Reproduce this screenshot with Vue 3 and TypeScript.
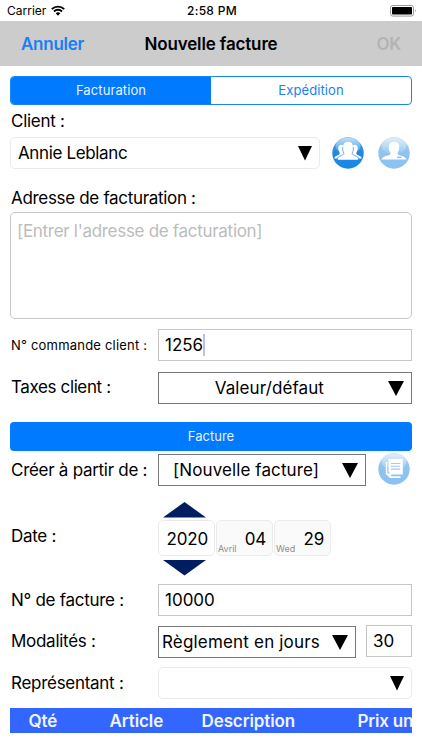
<script setup lang="ts">
import { ref } from 'vue'

const tab = ref<'billing' | 'shipping'>('billing')
const dateParts = [
  { value: '2020', note: '' },
  { value: '04', note: 'Avril' },
  { value: '29', note: 'Wed' },
]
const columns = [
  { key: 'qty', title: 'Qté' },
  { key: 'item', title: 'Article' },
  { key: 'desc', title: 'Description' },
  { key: 'price', title: 'Prix un' },
]
</script>

<template>
  <div class="screen">
    <header class="status">
      <span class="network">
        <span class="carrier">Carrier</span>
        <svg class="wifi" viewBox="0 0 14 11">
          <path d="M0.8 4.2 A8.8 8.8 0 0 1 13.2 4.2" />
          <path d="M3 6.5 A5.6 5.6 0 0 1 11 6.5" />
          <path class="dot" d="M4.7 8.3 A3.3 3.3 0 0 1 9.3 8.3 L7 10.7 Z" />
        </svg>
      </span>
      <span class="clock">2:58 PM</span>
      <svg class="battery" viewBox="0 0 27 12">
        <rect x="0.5" y="0.5" width="23" height="10.6" rx="2.3" fill="#fff" stroke="#999" />
        <rect x="2" y="2" width="20" height="7.6" rx="0.8" />
        <path d="M25 4 Q26.4 5.8 25 7.6 Z" fill="#888" />
      </svg>
    </header>

    <nav class="nav">
      <span class="cancel">Annuler</span>
      <span class="title">Nouvelle facture</span>
      <span class="ok">OK</span>
    </nav>

    <main class="form">
      <div class="segments">
        <span class="segment" :class="{ on: tab === 'billing' }" @click="tab = 'billing'">Facturation</span>
        <span class="segment" :class="{ on: tab === 'shipping' }" @click="tab = 'shipping'">Expédition</span>
      </div>

      <div class="label client-label">Client :</div>
      <div class="row client-row">
        <div class="select soft client">
          <span class="client-name">Annie Leblanc</span>
          <svg class="arrow small" viewBox="0 0 14 15"><path d="M0 0H14L7 14.5Z" /></svg>
        </div>
        <svg class="orb group" viewBox="0 0 32 32">
          <defs>
            <linearGradient id="orbBlue" x1="0" y1="0" x2="0" y2="1">
              <stop offset="0" stop-color="#5fadec" />
              <stop offset="0.45" stop-color="#2488df" />
              <stop offset="1" stop-color="#1687ea" />
            </linearGradient>
            <linearGradient id="gloss" x1="0" y1="0" x2="0" y2="1">
              <stop offset="0" stop-color="#fff" stop-opacity="0.6" />
              <stop offset="1" stop-color="#fff" stop-opacity="0.05" />
            </linearGradient>
          </defs>
          <circle cx="16" cy="16" r="15.7" fill="url(#orbBlue)" />
          <ellipse cx="16" cy="9" rx="12.5" ry="8.3" fill="url(#gloss)" />
          <g fill="#fff">
            <path d="M2.2 21.5 Q2.8 19 7 17.8 L7.8 16 Q6 13.4 6.2 10.8 Q6.6 7.8 9.4 7.8 Q12 8 12 12 L13 21.5Z" />
            <path d="M29.8 21.5 Q29.2 19 25 17.8 L24.2 16 Q26 13.4 25.8 10.8 Q25.4 7.8 22.6 7.8 Q20 8 20 12 L19 21.5Z" />
            <path d="M5.6 22.8 Q6 20.2 11 18.6 Q12.5 18 12.4 16.4 Q11 13.4 11.1 9.2 Q11.6 4.8 16 4.8 Q20.4 4.8 20.9 9.2 Q21 13.4 19.6 16.4 Q19.5 18 21 18.6 Q26 20.2 26.4 22.8Z" />
          </g>
          <path d="M4.6 22.2 Q5.4 19.5 10.2 18.1 Q11.6 17.5 11.6 16.4 Q10.6 14 10.6 10 M27.4 22.2 Q26.6 19.5 21.8 18.1 Q20.4 17.5 20.4 16.4 Q21.4 14 21.4 10" fill="none" stroke="#4aa0e8" stroke-width="0.8" />
        </svg>
        <svg class="orb faded" viewBox="0 0 32 32">
          <circle cx="16" cy="16" r="15.7" fill="url(#orbBlue)" />
          <ellipse cx="16" cy="9" rx="12.5" ry="8.3" fill="url(#gloss)" />
          <path fill="#fff" d="M3.4 22.5 Q4 19.6 10.8 18.2 Q12.8 17.6 12.4 15.9 Q10.5 13 10.8 8.9 Q11.3 4.8 16 4.8 Q20.7 4.8 21.2 8.9 Q21.5 13 19.6 15.9 Q19.2 17.6 21.2 18.2 Q28 19.6 28.6 22.5Z" />
          <rect x="19" y="19.6" width="4.5" height="1.5" fill="#2488df" />
        </svg>
      </div>

      <div class="label address-label">Adresse de facturation :</div>
      <div class="address">[Entrer l'adresse de facturation]</div>

      <div class="row field-row order-row">
        <span class="label order-label">N° commande client :</span>
        <div class="input grow">1256<i class="caret"></i></div>
      </div>

      <div class="row field-row tax-row">
        <span class="label tax-label">Taxes client :</span>
        <div class="select hard grow tax">
          <span class="tax-text">Valeur/défaut</span>
          <svg class="arrow" viewBox="0 0 16 15"><path d="M0 0H16L8 15Z" /></svg>
        </div>
      </div>

      <div class="section">Facture</div>

      <div class="row field-row create-row">
        <span class="label create-label">Créer à partir de :</span>
        <div class="select hard create">
          <span class="create-text">[Nouvelle facture]</span>
          <svg class="arrow" viewBox="0 0 16 15"><path d="M0 0H16L8 15Z" /></svg>
        </div>
        <svg class="orb faded note-orb" viewBox="0 0 32 32">
          <circle cx="16" cy="16" r="15.7" fill="url(#orbBlue)" />
          <ellipse cx="16" cy="9" rx="12.5" ry="8.3" fill="url(#gloss)" />
          <path d="M10.5 6H24.8V21.5H13.5L10.5 18.8Z" fill="#fff" />
          <path d="M13 10.5H22.3M13 13.3H22.3M13 16.1H22.3" fill="none" stroke="#409be3" stroke-width="1.1" />
          <path d="M7.8 9V21L12 25H22.5V23.2H13.2V20.2H9.3V9Z" fill="#fff" />
        </svg>
      </div>

      <div class="row date-row">
        <span class="label date-label">Date :</span>
        <div class="picker">
          <svg class="step" viewBox="0 0 42 15.5" preserveAspectRatio="none"><path d="M0 15.5L21 0L42 15.5Z" /></svg>
          <div class="dates">
            <div v-for="p in dateParts" :key="p.value" class="date" :class="{ current: !p.note }">
              <small v-if="p.note" class="note">{{ p.note }}</small>
              <span class="value">{{ p.value }}</span>
            </div>
          </div>
          <svg class="step" viewBox="0 0 42 15.5" preserveAspectRatio="none"><path d="M0 0H42L21 15.5Z" /></svg>
        </div>
      </div>

      <div class="row field-row number-row">
        <span class="label number-label">N° de facture :</span>
        <div class="input grow">10000</div>
      </div>

      <div class="row field-row terms-row">
        <span class="label terms-label">Modalités :</span>
        <div class="select hard terms">
          <span class="terms-text">Règlement en jours</span>
          <svg class="arrow" viewBox="0 0 16 15"><path d="M0 0H16L8 15Z" /></svg>
        </div>
        <div class="input days">30</div>
      </div>

      <div class="row field-row rep-row">
        <span class="label rep-label">Représentant :</span>
        <div class="select soft grow rep">
          <svg class="arrow small" viewBox="0 0 14 15"><path d="M0 0H14L7 14.5Z" /></svg>
        </div>
      </div>

      <div class="table-head">
        <span v-for="c in columns" :key="c.key" :class="c.key">{{ c.title }}</span>
      </div>
    </main>
  </div>
</template>

<style>
body {
  margin: 0;
  background: #fff;
}
</style>

<style scoped>
.screen {
  width: 422px;
  height: 750px;
  overflow: hidden;
  background: #fff;
  color: #000;
  font-family: Inter, 'Liberation Sans', sans-serif;
  font-size: 17px;
  line-height: 20px;
  white-space: nowrap;
}
.screen *,
.screen {
  box-sizing: border-box;
}
svg {
  display: block;
  flex: none;
}
.status {
  display: grid;
  grid-template-columns: 1fr auto 1fr;
  align-items: center;
  height: 21px;
  padding: 0 5px 0 7px;
  font-size: 12px;
}
.network {
  display: flex;
  align-items: center;
  gap: 5px;
}
.wifi {
  width: 14px;
  height: 11px;
  fill: none;
  stroke: #000;
  stroke-width: 1.9;
}
.wifi .dot {
  fill: #000;
  stroke: none;
}
.clock {
  font-weight: 500;
  letter-spacing: 0.3px;
}
.battery {
  justify-self: end;
  width: 27px;
  height: 12px;
}
.nav {
  display: grid;
  grid-template-columns: 100px 1fr 100px;
  align-items: center;
  height: 45px;
  padding: 0 21px;
  background: #ccc;
  font-weight: 600;
}
.cancel {
  color: #1b7ff2;
  letter-spacing: -0.25px;
}
.title {
  text-align: center;
  letter-spacing: -0.15px;
}
.ok {
  color: #b3b3b3;
  text-align: right;
  letter-spacing: -0.3px;
}
.form {
  display: flex;
  flex-direction: column;
  padding: 10px 10px 0;
}
.segments {
  display: flex;
  height: 29px;
  border: 1px solid #1a84fb;
  border-radius: 4px;
  overflow: hidden;
}
.segment {
  flex: 1;
  line-height: 27px;
  text-align: center;
  font-size: 13px;
  letter-spacing: 0.1px;
  color: #1a7ff0;
}
.segment.on {
  background: #007aff;
  color: #e8f3ff;
}
.row {
  display: flex;
}
.label {
  padding-left: 1px;
  letter-spacing: -0.28px;
}
.field-row {
  align-items: center;
  height: 32px;
}
.field-row > .label {
  width: 148px;
  flex: none;
}
.client-label {
  margin-top: 6px;
}
.client-row {
  margin-top: 6px;
  height: 32px;
}
.select,
.input {
  display: flex;
  align-items: center;
  height: 32px;
  background: #fff;
}
.grow {
  flex: 1;
}
.soft {
  border: 1px solid #ebebeb;
  border-radius: 5px;
}
.hard {
  border: 1px solid #777;
}
.input {
  border: 1px solid #c6c6c6;
  padding-left: 6px;
}
.arrow {
  width: 16px;
  height: 15px;
}
.arrow.small {
  width: 14px;
}
.client {
  width: 310px;
  justify-content: space-between;
  padding: 0 7px;
}
.client-name {
  letter-spacing: -0.36px;
}
.orb {
  width: 32px;
  height: 32px;
}
.group {
  margin-left: 12px;
}
.faded {
  margin-left: 14px;
  opacity: 0.5;
}
.address-label {
  margin-top: 19px;
  letter-spacing: -0.32px;
}
.address {
  height: 107px;
  margin-top: 4px;
  padding: 8px 6px;
  border: 1px solid #c7c7c7;
  border-radius: 5px;
  color: #bcbcbc;
  letter-spacing: -0.3px;
}
.order-row {
  margin-top: 10px;
}
.order-row .order-label {
  font-size: 13px;
  letter-spacing: 0.2px;
}
.caret {
  width: 2px;
  height: 22px;
  background: #b8c1ee;
}
.tax-row {
  margin-top: 11px;
}
.tax-row .tax-label {
  padding-bottom: 2px;
  letter-spacing: -0.38px;
}
.tax {
  justify-content: flex-end;
  padding-right: 7px;
}
.tax-text {
  margin-right: 64px;
  letter-spacing: 0.1px;
}
.section {
  height: 29px;
  margin-top: 18px;
  border-radius: 4px;
  background: #007aff;
  color: #e8f3ff;
  font-size: 13px;
  line-height: 29px;
  text-align: center;
}
.create-row {
  margin-top: 3px;
}
.create {
  width: 208px;
  justify-content: space-between;
  padding: 0 7px 0 14px;
}
.create-text {
  letter-spacing: 0.1px;
}
.note-orb {
  margin-left: 12px;
  position: relative;
  top: -1px;
}
.date-row {
  align-items: center;
  height: 74px;
  margin-top: 16px;
}
.date-row .date-label {
  width: 148px;
  padding-bottom: 7px;
}
.picker {
  display: flex;
  flex-direction: column;
}
.step {
  width: 43px;
  height: 15.5px;
  margin-left: 5px;
  fill: #001d5f;
}
.dates {
  display: flex;
  gap: 1px;
  margin: 2.5px 0 4px;
}
.date {
  display: flex;
  justify-content: flex-end;
  width: 57px;
  height: 36px;
  padding: 0 6px 0 1px;
  border: 1px solid #ebebeb;
  border-radius: 5px;
  background: #fafafa;
}
.date.current {
  background: #fff;
}
.value {
  line-height: 36px;
  letter-spacing: -0.2px;
}
.note {
  align-self: flex-end;
  margin-right: auto;
  font-size: 9px;
  line-height: 13px;
  color: #8e8e8e;
}
.number-row {
  margin-top: 8px;
}
.terms-row {
  margin-top: 10px;
}
.terms-row .terms-label {
  padding-bottom: 2px;
}
.terms {
  width: 198px;
  justify-content: space-between;
  padding: 0 7px 0 3px;
}
.terms-text {
  letter-spacing: 0.18px;
}
.days {
  width: 46px;
  margin: 0 0 2px 10px;
}
.rep-row {
  margin-top: 9px;
}
.rep {
  justify-content: flex-end;
  padding-right: 7px;
}
.table-head {
  display: grid;
  grid-template-columns: 81px 92px 156px auto;
  height: 25px;
  margin-top: 9px;
  padding-left: 18.5px;
  overflow: hidden;
  background: #36f;
  color: #f0f4ff;
  font-weight: 600;
  line-height: 27px;
  letter-spacing: -0.1px;
}
.price {
  letter-spacing: -0.2px;
}
</style>
